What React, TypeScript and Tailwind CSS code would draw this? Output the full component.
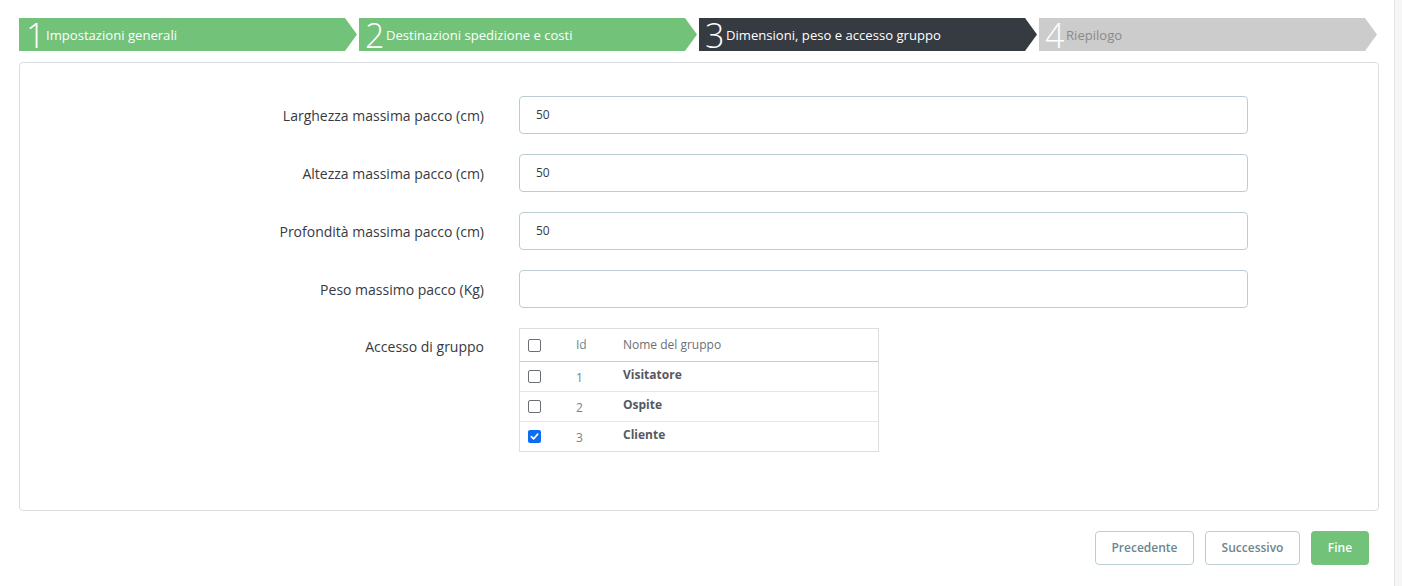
import React from "react";

const steps = [
  { n: "1", label: "Impostazioni generali", bg: "bg-[#72c279]", text: "text-white", num: "text-white" },
  { n: "2", label: "Destinazioni spedizione e costi", bg: "bg-[#72c279]", text: "text-white", num: "text-white" },
  { n: "3", label: "Dimensioni, peso e accesso gruppo", bg: "bg-[#363a41]", text: "text-white", num: "text-white" },
  { n: "4", label: "Riepilogo", bg: "bg-[#cccccc]", text: "text-[#8a8a8a]", num: "text-white" },
];

const fields = [
  { label: "Larghezza massima pacco (cm)", value: "50" },
  { label: "Altezza massima pacco (cm)", value: "50" },
  { label: "Profondità massima pacco (cm)", value: "50" },
  { label: "Peso massimo pacco (Kg)", value: "" },
];

const groups = [
  { id: "1", name: "Visitatore", checked: false },
  { id: "2", name: "Ospite", checked: false },
  { id: "3", name: "Cliente", checked: true },
];

function Box({ checked }: { checked: boolean }) {
  if (checked) {
    return (
      <span className="flex h-[13px] w-[13px] items-center justify-center rounded-[2px] bg-[#0b6cf5]">
        <svg width="9" height="9" viewBox="0 0 10 10">
          <path d="M1.5 5.2 L4 7.6 L8.6 2.4" fill="none" stroke="white" strokeWidth="1.8" strokeLinecap="round" strokeLinejoin="round" />
        </svg>
      </span>
    );
  }
  return <span className="block h-[13px] w-[13px] rounded-[2px] border-[1.5px] border-[#6b6f75] bg-white" />;
}

export default function App() {
  return (
    <div
      className="flex h-[586px] w-[1402px] bg-[#f6f6f6]"
      style={{ fontFamily: '"Open Sans", "Noto Sans", sans-serif' }}
    >
      <div className="flex h-full w-[1395px] flex-col border-r border-[#e3e3e3] bg-white pl-[19px] pt-[18px]">
        {/* Steps */}
        <div className="flex h-[33px] gap-[2px]">
          {steps.map((s, i) => (
            <div
              key={s.n}
              className={`flex h-[33px] w-[338px] items-center ${s.bg}`}
              style={{ clipPath: "polygon(0 0, calc(100% - 12px) 0, 100% 50%, calc(100% - 12px) 100%, 0 100%)" }}
            >
              <span className={`ml-[6px] w-[18px] text-[34px] font-light leading-none ${s.num} ${i === 0 ? "pl-[1px]" : ""}`}>
                {s.n}
              </span>
              <span className={`ml-[3px] mt-[2px] origin-left scale-x-[0.97] whitespace-nowrap text-[13.5px] ${s.text}`}>
                {s.label}
              </span>
            </div>
          ))}
        </div>

        {/* Card */}
        <div className="mt-[11px] h-[449px] w-[1360px] rounded-[4px] border border-[#dcdfe2] pt-[33px]">
          <div className="flex flex-col gap-[20px]">
            {fields.map((f) => (
              <div key={f.label} className="flex items-center">
                <div className="w-[464px] text-right text-[14px] text-[#363a41]">{f.label}</div>
                <div className="ml-[35px] flex h-[38px] w-[729px] items-center rounded-[4px] border border-[#bbcdd2] px-[16px] text-[12px] text-[#363a41]">
                  {f.value}
                </div>
              </div>
            ))}
            <div className="flex items-start">
              <div className="w-[464px] pt-[8px] text-right text-[14px] text-[#363a41]">Accesso di gruppo</div>
              <div className="ml-[35px] w-[360px] border border-[#dcdfe2] text-[12px]">
                <div className="flex h-[33px] items-center border-b border-[#a9d9e6]">
                  <div className="w-[47px] pl-[8px]">
                    <Box checked={false} />
                  </div>
                  <div className="w-[56px] pl-[9px] text-[#6c868e]">Id</div>
                  <div className="text-[#6c6f73]">Nome del gruppo</div>
                </div>
                {groups.map((g, i) => (
                  <div key={g.id} className={`flex items-center ${i > 0 ? "h-[30px] border-t border-[#e4e7ea]" : "h-[29px]"}`}>
                    <div className="w-[47px] pl-[8px]">
                      <Box checked={g.checked} />
                    </div>
                    <div className="w-[56px] pl-[9px] pt-[3px] text-[#6c868e]">{g.id}</div>
                    <div className="pb-[3px] font-bold text-[#55595e]">{g.name}</div>
                  </div>
                ))}
              </div>
            </div>
          </div>
        </div>

        {/* Buttons */}
        <div className="mt-[20px] flex w-[1350px] justify-end gap-[11px]">
          <button className="h-[34px] w-[99px] rounded-[4px] border border-[#bbcdd2] bg-white text-[12px] font-semibold text-[#6c868e]">
            Precedente
          </button>
          <button className="h-[34px] w-[95px] rounded-[4px] border border-[#bbcdd2] bg-white text-[12px] font-semibold text-[#6c868e]">
            Successivo
          </button>
          <button className="h-[34px] w-[58px] rounded-[4px] bg-[#72c279] text-[12px] font-semibold text-white">
            Fine
          </button>
        </div>
      </div>
    </div>
  );
}
